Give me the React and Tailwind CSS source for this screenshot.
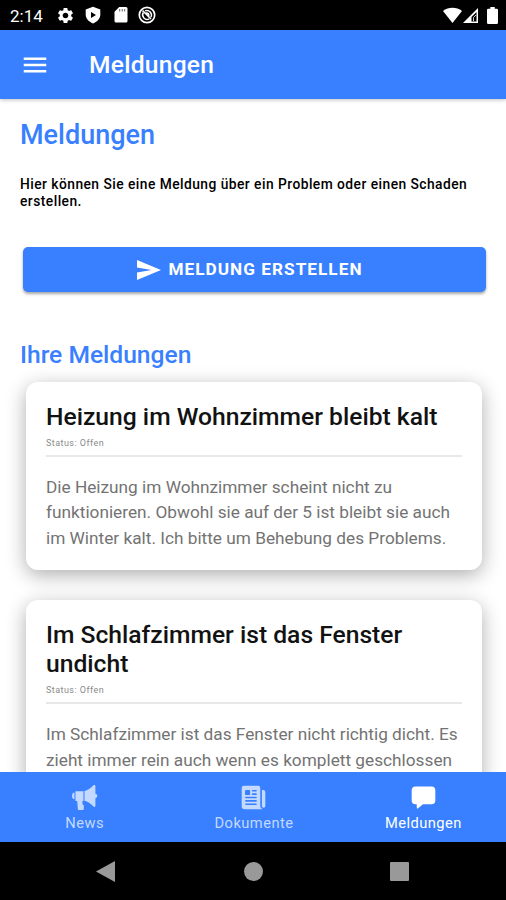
import { MdSettings, MdMenu } from "react-icons/md";
import { IoNewspaper, IoChatbox } from "react-icons/io5";

function MegaphoneIcon({ className }) {
  return (
    <svg className={className} viewBox="0 0 26 26" fill="currentColor">
      <path d="M3.300 8.200v6.600C1.700 14.600 1 13.300 1 11.500s.7-3.100 2.300-3.300z" />
      <path d="M4.300 7h7.700v9.300h-1v3.200l1.300 1v3.800c0 .5-.3.700-.7.700H7.400c-.5 0-.8-.3-.8-.8L6 16.300H4.300z" />
      <path d="M13 6.800c3-.8 6-2.700 8.600-5.500.8-.7 1.900-.3 1.900.7v7.500c1.100.2 1.800 1 1.800 2s-.7 1.800-1.800 2V21c0 1-1.100 1.400-1.900.7-2.600-2.800-5.600-4.700-8.600-5.500z" />
    </svg>
  );
}

const reports = [
  {
    title: "Heizung im Wohnzimmer bleibt kalt",
    status: "Offen",
    text: "Die Heizung im Wohnzimmer scheint nicht zu funktionieren. Obwohl sie auf der 5 ist bleibt sie auch im Winter kalt. Ich bitte um Behebung des Problems.",
  },
  {
    title: "Im Schlafzimmer ist das Fenster undicht",
    status: "Offen",
    text: "Im Schlafzimmer ist das Fenster nicht richtig dicht. Es zieht immer rein auch wenn es komplett geschlossen",
  },
];

const tabs = [
  { label: "News", icon: MegaphoneIcon },
  { label: "Dokumente", icon: IoNewspaper },
  { label: "Meldungen", icon: IoChatbox, active: true },
];

function StatusBar() {
  return (
    <div className="flex h-[30px] shrink-0 items-center bg-black pl-[10px] pr-[4px] text-white">
      <span className="mt-[3px] w-[46px] text-[17px]">2:14</span>
      <MdSettings className="mt-px size-[19px]" />
      <svg className="ml-[9px] size-[18px]" viewBox="0 0 18 18">
        <path d="M9 .8 16.300 3.500V8.600c0 4-2.900 7.200-7.300 8.900C4.600 15.800 1.700 12.600 1.700 8.600V3.500z" fill="#fff" />
        <path d="M7 6v6l5-3z" fill="#000" />
      </svg>
      <svg className="ml-[10px] size-[18px]" viewBox="0 0 18 18">
        <path d="M7.200 1H14a1.500 1.500 0 0 1 1.500 1.500v12.500a1.500 1.500 0 0 1-1.500 1.500H4A1.500 1.500 0 0 1 2.500 15V5.700z" fill="#fff" />
        <path d="M7.700 3v2.500M10.200 3v2.500M12.700 3v2.500" stroke="#000" strokeWidth="1" opacity=".6" />
      </svg>
      <svg className="ml-[8px] size-[18px]" viewBox="0 0 18 18" fill="none" stroke="#fff">
        <circle cx="9" cy="9" r="7.700" strokeWidth="1.700" />
        <path d="M5.300 6.500a4.500 4.500 0 0 0 6 6.300M7 4.900a4.500 4.500 0 0 1 5.800 6.300" strokeWidth="1.500" />
        <path d="m4.500 4.500 8.500 8.500M8 7.200c1.800-.5 3 .6 2.900 2.500" strokeWidth="1.600" />
      </svg>
      <svg className="ml-auto h-[17px] w-[19px]" viewBox="0 0 19 17">
        <path d="M0 4C5.500-.3 13.500-.3 19 4L9.500 16z" fill="#fff" />
      </svg>
      <svg className="h-[17px] w-[17px]" viewBox="0 0 17 17">
        <path d="M16 1v15H1z" fill="#fff" />
        <path d="M14.500 5v9.500H9.500V10z" fill="#000" />
        <path d="M11.500 14V10.500l2.500-2.500" fill="none" stroke="#fff" strokeWidth=".8" />
      </svg>
      <svg className="ml-[8px] mr-[4px] h-[17px] w-[11px]" viewBox="0 0 11 17" fill="#fff">
        <path d="M3.300 0h4.400v1.700h2a1.300 1.300 0 0 1 1.300 1.300v12.700a1.300 1.300 0 0 1-1.300 1.300H1.300A1.300 1.300 0 0 1 0 15.700V3a1.300 1.300 0 0 1 1.300-1.300h2z" />
      </svg>
    </div>
  );
}

function Header() {
  return (
    <header className="relative z-10 flex h-[69px] shrink-0 items-center bg-[#3880ff] pl-[20px] text-white shadow-[0_1px_4px_rgba(0,0,0,0.25)]">
      <MdMenu className="size-[30px]" />
      <h1 className="ml-[39px] mt-[2px] text-[24.600px] font-medium tracking-[0.250px]">
        Meldungen
      </h1>
    </header>
  );
}

function ReportCard({ report }) {
  return (
    <article className="mb-[30px] rounded-[12px] bg-white px-[20px] pb-[18px] pt-[20px] shadow-[0_5px_20px_rgba(0,0,0,0.32)]">
      <h3 className="text-[24.650px] font-medium leading-[29.500px] text-[#121212]">
        {report.title}
      </h3>
      <p className="mt-[6px] text-[9px] leading-[10px] tracking-[0.450px] text-[#8a8a8a]">
        Status: {report.status}
      </p>
      <hr className="mt-[7px] border-t-2 border-[#e8e8e8]" />
      <p className="-mr-1 mt-[18px] text-[17.240px] leading-[25.800px] text-[#737373]">
        {report.text}
      </p>
    </article>
  );
}

function TabBar() {
  return (
    <nav className="relative z-10 -mr-[2px] flex h-[70px] shrink-0 bg-[#3880ff]">
      {tabs.map(({ label, icon: Icon, active }) => (
        <div
          key={label}
          className={`flex flex-1 flex-col items-center pt-[12px] ${
            active ? "text-white" : "text-[#c3d9ff]"
          }`}
        >
          <Icon className="size-[27px]" />
          <span className="mt-[2px] text-[14.700px] leading-[20px] tracking-[0.450px]">
            {label}
          </span>
        </div>
      ))}
    </nav>
  );
}

function NavigationBar() {
  return (
    <div className="flex h-[58px] shrink-0 items-center justify-between bg-black pl-[96px] pr-[97px]">
      <svg className="h-[21px] w-[19px]" viewBox="0 0 19 21">
        <path d="M19 0v21L0 10.500z" fill="#999" />
      </svg>
      <div className="ml-px size-[19px] rounded-full bg-[#999]" />
      <div className="size-[19px] rounded-[1px] bg-[#999]" />
    </div>
  );
}

function App() {
  return (
    <div className="flex h-[900px] w-[506px] flex-col overflow-hidden bg-white font-[Roboto,sans-serif]">
      <StatusBar />
      <Header />
      <main className="min-h-0 flex-1 overflow-hidden">
        <div className="px-[20px] pt-[20px]">
          <h2 className="text-[27px] font-medium leading-[32px] text-[#3880ff]">
            Meldungen
          </h2>
          <p className="mt-[25px] text-[13.800px] font-medium leading-[17px] tracking-[0.460px] text-black">
            Hier können Sie eine Meldung über ein Problem oder einen Schaden
            erstellen.
          </p>
          <button className="ml-[3px] mt-[37px] flex h-[45px] w-[463px] items-center justify-center gap-[7px] rounded-[5px] bg-[#3880ff] pr-[9px] text-[17.200px] font-bold uppercase tracking-[1.030px] text-white shadow-[0_2px_3px_rgba(0,0,0,0.35)]">
            <svg className="h-[20px] w-[24px]" viewBox="0 0 24 20" fill="currentColor">
              <path d="M0 0 24 10 0 20v-7.500l14.500-2.500L0 7.500z" />
            </svg>
            Meldung erstellen
          </button>
          <h2 className="mt-[48px] text-[24.600px] font-medium leading-[30px] text-[#3880ff]">
            Ihre Meldungen
          </h2>
        </div>
        <div className="mt-[12px] pl-[26px] pr-[24px]">
          {reports.map((report) => (
            <ReportCard key={report.title} report={report} />
          ))}
        </div>
      </main>
      <TabBar />
      <NavigationBar />
    </div>
  );
}

export default App;
